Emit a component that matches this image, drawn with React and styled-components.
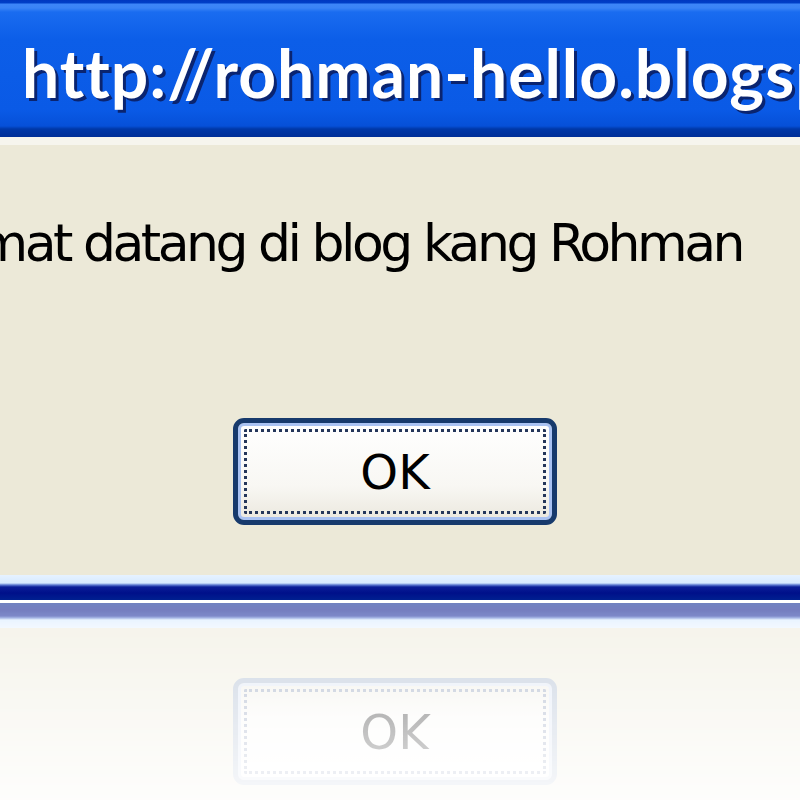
import React from 'react';
import styled, { createGlobalStyle } from 'styled-components';

const GlobalStyle = createGlobalStyle`
  html, body {
    margin: 0;
    padding: 0;
    background: #fff;
    overflow: hidden;
  }
`;

const Page = styled.div`
  width: 800px;
  height: 800px;
  overflow: hidden;
  display: flex;
  flex-direction: column;
`;

const Window = styled.div`
  display: flex;
  flex-direction: column;
  background: #ece9d8;
`;

const TitleBar = styled.div`
  height: 137px;
  display: flex;
  align-items: center;
  padding-left: 22px;
  box-sizing: border-box;
  overflow: hidden;
  background: linear-gradient(
    #0038c0 0px,
    #0040c8 3px,
    #3d86f8 4px,
    #3a84f6 8px,
    #1a6cf0 12px,
    #0c5ee8 40px,
    #0a5ae6 110px,
    #0650d8 126px,
    #0038a8 129px,
    #002f98 137px
  );
`;

const Title = styled.div`
  font-family: "Lato", "DejaVu Sans", sans-serif;
  font-weight: bold;
  font-size: 66px;
  letter-spacing: 1px;
  color: #fff;
  white-space: nowrap;
  text-shadow: 3px 3px 0 #0a2470;
  margin-top: 8px;
`;

const Body = styled.div`
  height: 438px;
  box-sizing: border-box;
  border-top: 8px solid #f6f5ee;
  display: flex;
  flex-direction: column;
`;

const MessageRow = styled.div`
  display: flex;
  justify-content: flex-end;
  padding-right: 58px;
  padding-top: 68px;
  overflow: hidden;
`;

const Message = styled.div`
  font-family: "DejaVu Sans", "Liberation Sans", sans-serif;
  font-size: 52px;
  letter-spacing: -3.5px;
  line-height: 60px;
  color: #000;
  white-space: nowrap;
`;

const ButtonRow = styled.div`
  display: flex;
  padding-left: 233px;
  padding-top: ${props => props.top || 0}px;
`;

const Button = styled.div`
  position: relative;
  width: 324px;
  height: 107px;
  box-sizing: border-box;
  border: 5px solid ${props => props.faded ? '#9fb0c8' : '#173a6c'};
  border-radius: 11px;
  background: linear-gradient(#ffffff, #f8f7f3 65%, #ebe8de);
  box-shadow: inset 0 0 0 3px ${props => props.faded ? '#d6e0f2' : '#a9c2f2'};
  display: flex;
  align-items: center;
  justify-content: center;
  font-family: "DejaVu Sans", "Liberation Sans", sans-serif;
  font-size: 48px;
  color: #000;

  &::after {
    content: "";
    position: absolute;
    inset: 6px;
    border: 3px dotted ${props => props.faded ? '#8090b0' : '#24365a'};
    border-radius: 2px;
  }
`;

const BottomFrame = styled.div`
  height: 25px;
  background: linear-gradient(
    #e6f2ff 0px,
    #d6eaff 8px,
    #5a78d0 10px,
    #0a1e98 12px,
    #00108a 18px,
    #002090 25px
  );
`;

const Reflection = styled.div`
  height: 200px;
  padding-top: 3px;
  box-sizing: border-box;
  overflow: hidden;
  background: #fff;
`;

const Mirror = styled.div`
  display: flex;
  flex-direction: column;
  background: #ece9d8;
  transform: scaleY(-1);
  -webkit-mask-image: linear-gradient(to top, rgba(0,0,0,.56), rgba(0,0,0,.32) 45%, rgba(0,0,0,.04));
  mask-image: linear-gradient(to top, rgba(0,0,0,.56), rgba(0,0,0,.32) 45%, rgba(0,0,0,.04));
`;

const Spacer = styled.div`
  height: ${props => props.h}px;
`;

export default function App() {
  return (
    <Page>
      <GlobalStyle />
      <Window>
        <TitleBar>
          <Title>http://rohman-hello.blogspot.com</Title>
        </TitleBar>
        <Body>
          <MessageRow>
            <Message>Selamat datang di blog kang Rohman</Message>
          </MessageRow>
          <ButtonRow top={145}>
            <Button>OK</Button>
          </ButtonRow>
        </Body>
        <BottomFrame />
      </Window>
      <Reflection>
        <Mirror>
          <Spacer h={30} />
          <ButtonRow>
            <Button faded>OK</Button>
          </ButtonRow>
          <Spacer h={50} />
          <BottomFrame />
        </Mirror>
      </Reflection>
    </Page>
  );
}
